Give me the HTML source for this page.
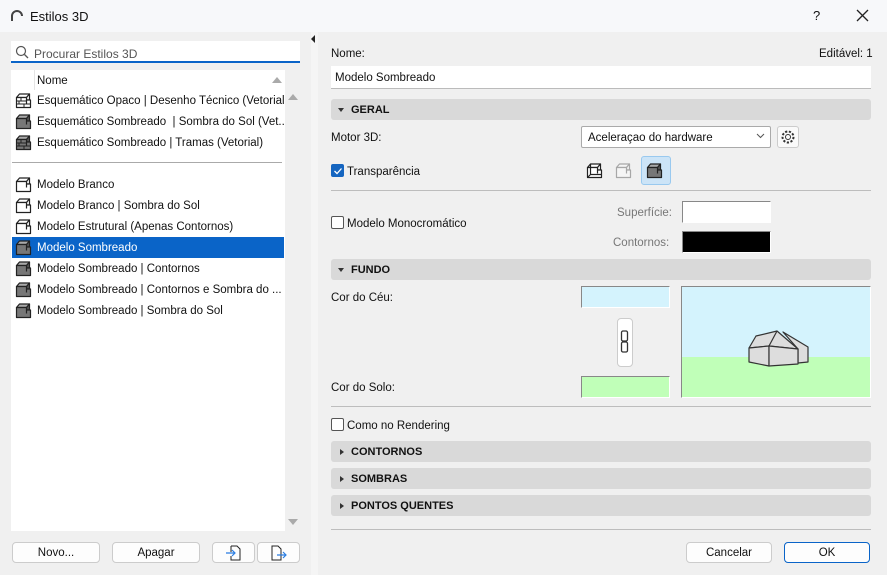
<!DOCTYPE html>
<html><head><meta charset="utf-8"><style>
*{box-sizing:border-box;margin:0;padding:0}
body{width:887px;height:575px;overflow:hidden;background:#f0f0f0;font-family:"Liberation Sans",sans-serif;font-size:11.5px;color:#111;position:relative}
.a{position:absolute}
.row{position:absolute;left:12px;width:272px;height:21px;line-height:23px;padding-left:25px;white-space:nowrap;overflow:hidden}
.row svg{position:absolute;left:3px;top:2px}
.sel{background:#0a64c8;color:#fff}
.hdr{position:absolute;left:331px;width:540px;height:21px;background:#d9d9d9;border-radius:3px;font-weight:bold;line-height:23px;padding-left:20px;font-size:11px}
.hdr:before{content:"";position:absolute;left:9px;top:8px;border-left:4px solid #333;border-top:3.5px solid transparent;border-bottom:3.5px solid transparent}
.hdr.open:before{left:7px;top:9px;border-top:4px solid #333;border-left:3.5px solid transparent;border-right:3.5px solid transparent;border-bottom:0}
.btn{position:absolute;height:21px;background:#fdfdfd;border:1px solid #ccc;border-radius:4px;text-align:center;line-height:21px}
.hr{position:absolute;left:331px;width:540px;height:1px;background:#bdbdbd}
.cb{position:absolute;width:13px;height:13px;border:1px solid #555;border-radius:2px;background:#fff}
.sw{position:absolute;border:1px solid #888;border-right-color:#fff;border-bottom-color:#fff}
.t{position:absolute;margin-top:2px}
</style></head><body>
<div class="a" style="left:0;top:0;width:887px;height:32px;background:#f7f8fa"></div>
<svg class="a" style="left:10px;top:9px" width="14" height="14"><path d="M2 12V7a5 5 0 0 1 10 0" fill="none" stroke="#444" stroke-width="2"/></svg>
<div class="a" style="left:30px;top:9px;font-size:13px">Estilos 3D</div>
<div class="a" style="left:813px;top:8px;font-size:13px">?</div>
<svg class="a" style="left:856px;top:9px" width="13" height="13"><path d="M1 1L12 12M12 1L1 12" stroke="#222" stroke-width="1.3"/></svg>
<div class="a" style="left:311px;top:32px;width:7px;height:543px;background:#f5f5f5"></div>
<div class="a" style="left:311px;top:35px;border-right:4px solid #222;border-top:4px solid transparent;border-bottom:4px solid transparent"></div>
<div class="a" style="left:11px;top:41px;width:289px;height:22px;background:#fff;border-bottom:2px solid #0a64c8"></div>
<svg class="a" style="left:15px;top:45px" width="15" height="15"><circle cx="6" cy="6" r="4.5" fill="none" stroke="#555" stroke-width="1.2"/><path d="M9.5 9.5L13 13" stroke="#555" stroke-width="1.3"/></svg>
<div class="a" style="left:34px;top:47px;color:#555;font-size:12px">Procurar Estilos 3D</div>
<div class="a" style="left:11px;top:70px;width:274px;height:461px;background:#fff"></div>
<div class="a" style="left:34px;top:70px;width:1px;height:20px;background:#e5e5e5"></div>
<div class="a" style="left:37px;top:75px">Nome</div>
<div class="a" style="left:272px;top:77px;border-bottom:6px solid #aaa;border-left:5px solid transparent;border-right:5px solid transparent"></div>
<div class="a" style="left:288px;top:94px;border-bottom:6px solid #aaa;border-left:5px solid transparent;border-right:5px solid transparent"></div>
<div class="a" style="left:288px;top:519px;border-top:6px solid #aaa;border-left:5px solid transparent;border-right:5px solid transparent"></div>
<svg width="0" height="0" style="position:absolute"><defs>
<g id="gc" stroke="#222" stroke-width="1.2" stroke-linejoin="round"><path d="M1.5 5.5L4.5 2H14.5L11.5 5.5z" fill="#aaa"/><path d="M11.5 5.5L14.5 2V8H11.5z" fill="#555"/><path d="M1.5 5.5H11.5V8H15.5V15.5H1.5z" fill="#777"/><path d="M11.5 8V11.5" fill="none"/></g>
<g id="wc" stroke="#222" stroke-width="1.2" stroke-linejoin="round"><path d="M1.5 5.5L4.5 2H14.5L11.5 5.5z" fill="#fff"/><path d="M11.5 5.5L14.5 2V8H11.5z" fill="#fff"/><path d="M1.5 5.5H11.5V8H15.5V15.5H1.5z" fill="#fff"/><path d="M11.5 8V11.5" fill="none"/></g>
</defs></svg>
<div class="row" style="top:90px"><svg width="17" height="17"><use href="#wc"/><path d="M1.5 9h10M1.5 12h14M6 5.5V9M4 9v3M9 12v3.5" stroke="#222" fill="none"/></svg>Esquemático Opaco | Desenho Técnico (Vetorial)</div>
<div class="row" style="top:111px"><svg width="17" height="17"><use href="#gc"/></svg>Esquemático Sombreado &nbsp;| Sombra do Sol (Vet...</div>
<div class="row" style="top:132px"><svg width="17" height="17"><use href="#gc"/><path d="M1.5 9h10M1.5 12h14M6 5.5V9M4 9v3M9 12v3.5" stroke="#222" fill="none"/></svg>Esquemático Sombreado | Tramas (Vetorial)</div>
<div class="a" style="left:12px;top:162px;width:270px;height:1px;background:#aaa"></div>
<div class="row" style="top:174px"><svg width="17" height="17"><use href="#wc"/></svg>Modelo Branco</div>
<div class="row" style="top:195px"><svg width="17" height="17"><use href="#wc"/></svg>Modelo Branco | Sombra do Sol</div>
<div class="row" style="top:216px"><svg width="17" height="17"><use href="#wc"/></svg>Modelo Estrutural (Apenas Contornos)</div>
<div class="row sel" style="top:237px"><svg width="17" height="17"><use href="#gc"/></svg>Modelo Sombreado</div>
<div class="row" style="top:258px"><svg width="17" height="17"><use href="#gc"/></svg>Modelo Sombreado | Contornos</div>
<div class="row" style="top:279px"><svg width="17" height="17"><use href="#gc"/></svg>Modelo Sombreado | Contornos e Sombra do ...</div>
<div class="row" style="top:300px"><svg width="17" height="17"><use href="#gc"/></svg>Modelo Sombreado | Sombra do Sol</div>
<div class="btn" style="left:12px;top:542px;width:88px">Novo...</div>
<div class="btn" style="left:112px;top:542px;width:88px">Apagar</div>
<div class="btn" style="left:212px;top:542px;width:43px"><svg width="20" height="18" style="margin-top:1px"><path d="M7 2h6l3 3v11H7v-4 M7 8V2" fill="none" stroke="#222"/><path d="M2 9h9M8 6l3 3-3 3" fill="none" stroke="#2a7de1" stroke-width="1.2"/></svg></div>
<div class="btn" style="left:257px;top:542px;width:43px"><svg width="20" height="18" style="margin-top:1px"><path d="M3 2h6l3 3v11H3z" fill="none" stroke="#222"/><path d="M8 11h9M14 8l3 3-3 3" fill="none" stroke="#2a7de1" stroke-width="1.2"/></svg></div>
<div class="t" style="left:331px;top:46px">Nome:</div>
<div class="t" style="left:819px;top:46px">Editável: 1</div>
<div class="a" style="left:331px;top:66px;width:540px;height:23px;background:#fff;border-bottom:1px solid #bbb;padding:6px 4px">Modelo Sombreado</div>
<div class="hdr open" style="top:99px">GERAL</div>
<div class="t" style="left:331px;top:130px">Motor 3D:</div>
<div class="a" style="left:581px;top:126px;width:190px;height:22px;background:#fff;border:1px solid #aaa;border-radius:2px;padding:5px 6px">Aceleraçao do hardware</div>
<svg class="a" style="left:756px;top:133px" width="9" height="6"><path d="M1 1l3.5 3.5L8 1" fill="none" stroke="#555"/></svg>
<div class="a" style="left:777px;top:126px;width:22px;height:22px;background:#fafafa;border:1px solid #ccc;border-radius:3px"></div>
<svg class="a" style="left:780px;top:129px" width="16" height="16"><circle cx="8" cy="8" r="2.5" fill="none" stroke="#333"/><circle cx="8" cy="8" r="5.5" fill="none" stroke="#333" stroke-dasharray="2.2 1.6" stroke-width="2"/></svg>
<div class="cb" style="left:331px;top:164px;background:#1565c0;border-color:#1565c0"></div>
<svg class="a" style="left:333px;top:166px" width="10" height="10"><path d="M1.5 5l2.5 2.5L8.5 2.5" fill="none" stroke="#fff" stroke-width="1.3"/></svg>
<div class="t" style="left:347px;top:164px">Transparência</div>
<svg class="a" style="left:586px;top:162px" width="18" height="18"><use href="#wc"/><path d="M4.5 2V12.5H15.5M1.5 15.5L4.5 12.5" fill="none" stroke="#222" stroke-width="1.2"/></svg>
<svg class="a" style="left:615px;top:162px;opacity:.35" width="18" height="18"><use href="#wc"/></svg>
<div class="a" style="left:641px;top:156px;width:30px;height:29px;background:#cce4f7;border:1px solid #99c9ef;border-radius:3px"></div>
<svg class="a" style="left:646px;top:162px" width="18" height="18"><use href="#gc"/></svg>
<div class="hr" style="top:190px"></div>
<div class="cb" style="left:331px;top:216px"></div>
<div class="t" style="left:347px;top:216px">Modelo Monocromático</div>
<div class="t" style="left:617px;top:205px;color:#777">Superfície:</div>
<div class="sw" style="left:682px;top:201px;width:89px;height:22px;background:#fff"></div>
<div class="t" style="left:613px;top:235px;color:#777">Contornos:</div>
<div class="sw" style="left:682px;top:231px;width:89px;height:22px;background:#000"></div>
<div class="hdr open" style="top:259px">FUNDO</div>
<div class="t" style="left:331px;top:290px">Cor do Céu:</div>
<div class="sw" style="left:581px;top:286px;width:89px;height:22px;background:#d4f3fd"></div>
<div class="a" style="left:617px;top:318px;width:16px;height:49px;background:#fff;border:1px solid #ccc;border-radius:4px"></div>
<svg class="a" style="left:620px;top:330px" width="10" height="24"><rect x="1.5" y="1" width="6" height="10" rx="1.5" fill="none" stroke="#333" stroke-width="1.3"/><rect x="1.5" y="12" width="6" height="10" rx="1.5" fill="none" stroke="#333" stroke-width="1.3"/></svg>
<div class="t" style="left:331px;top:380px">Cor do Solo:</div>
<div class="sw" style="left:581px;top:376px;width:89px;height:22px;background:#c0ffb8"></div>
<div class="sw" style="left:681px;top:286px;width:190px;height:112px;background:linear-gradient(#d4f3fd 0,#d4f3fd 70px,#c0ffb8 70px)"></div>
<svg class="a" style="left:745px;top:325px" width="70" height="45"><g stroke="#333" stroke-width="1.2" fill="#ddd" stroke-linejoin="round"><path d="M38 7L63 22V37L53 38V24z"/><path d="M4 23L11 11L32 6L53 24L24 21z"/><path d="M32 6L24 21"/><path d="M4 23L24 21V41L4 37z"/><path d="M24 21L53 24V39L24 41z"/></g></svg>
<div class="hr" style="top:406px"></div>
<div class="cb" style="left:331px;top:418px"></div>
<div class="t" style="left:347px;top:418px">Como no Rendering</div>
<div class="hdr" style="top:441px">CONTORNOS</div>
<div class="hdr" style="top:468px">SOMBRAS</div>
<div class="hdr" style="top:495px">PONTOS QUENTES</div>
<div class="hr" style="top:529px"></div>
<div class="btn" style="left:686px;top:542px;width:86px">Cancelar</div>
<div class="btn" style="left:784px;top:542px;width:86px;border:1.5px solid #0a64c8">OK</div>
</body></html>
